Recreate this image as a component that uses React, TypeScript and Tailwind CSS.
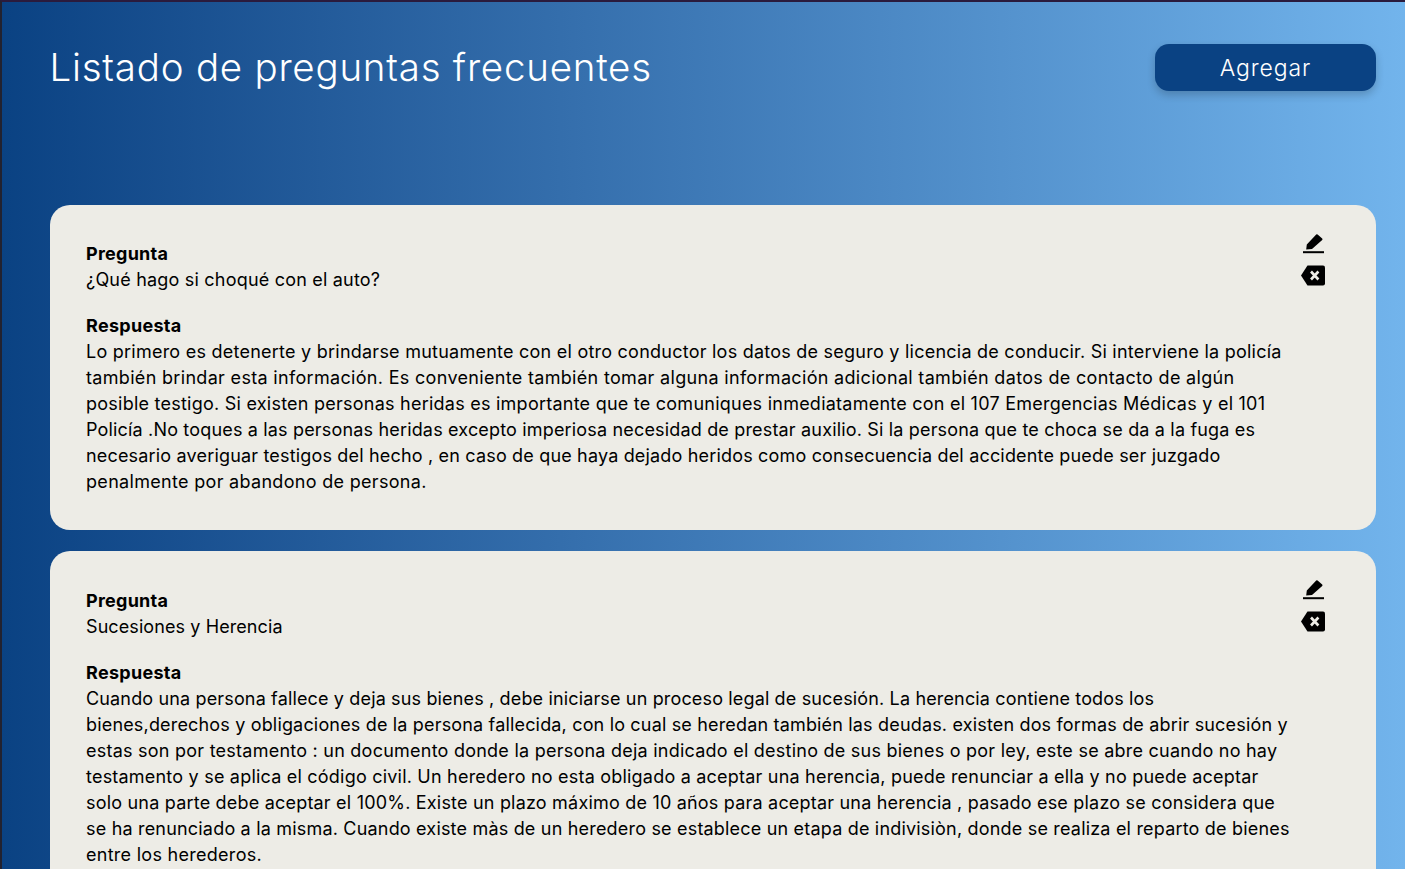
const faqs = [
  {
    question: "¿Qué hago si choqué con el auto?",
    questionClass: "tracking-[0.2px]",
    cardClass: "pt-[36px]",
    iconClass: "-mt-2",
    answer: [
      { text: "Lo primero es detenerte y brindarse mutuamente con el otro conductor los datos de seguro y licencia de conducir. Si interviene la policía", className: "tracking-[0.24px]" },
      { text: "también brindar esta información. Es conveniente también tomar alguna información adicional también datos de contacto de algún", className: "tracking-[0.32px]" },
      { text: "posible testigo. Si existen personas heridas es importante que te comuniques inmediatamente con el 107 Emergencias Médicas y el 101", className: "tracking-[0.24px]" },
      { text: "Policía .No toques a las personas heridas excepto imperiosa necesidad de prestar auxilio. Si la persona que te choca se da a la fuga es", className: "tracking-[0.17px]" },
      { text: "necesario averiguar testigos del hecho , en caso de que haya dejado heridos como consecuencia del accidente puede ser juzgado", className: "tracking-[0.175px]" },
      { text: "penalmente por abandono de persona.", className: "tracking-[0.31px]" },
    ],
  },
  {
    question: "Sucesiones y Herencia",
    questionClass: "tracking-[0.09px]",
    cardClass: "pt-[37px]",
    iconClass: "-mt-[9px]",
    answer: [
      { text: "Cuando una persona fallece y deja sus bienes , debe iniciarse un proceso legal de sucesión. La herencia contiene todos los", className: "tracking-[0.15px]" },
      { text: "bienes,derechos y obligaciones de la persona fallecida, con lo cual se heredan también las deudas. existen dos formas de abrir sucesión y", className: "tracking-[0.17px]" },
      { text: "estas son por testamento : un documento donde la persona deja indicado el destino de sus bienes o por ley, este se abre cuando no hay", className: "tracking-[0.24px]" },
      { text: "testamento y se aplica el código civil. Un heredero no esta obligado a aceptar una herencia, puede renunciar a ella y no puede aceptar", className: "tracking-[0.21px]" },
      { text: "solo una parte debe aceptar el 100%. Existe un plazo máximo de 10 años para aceptar una herencia , pasado ese plazo se considera que", className: "tracking-[0.2px]" },
      { text: "se ha renunciado a la misma. Cuando existe màs de un heredero se establece un etapa de indivisiòn, donde se realiza el reparto de bienes", className: "tracking-[0.19px]" },
      { text: "entre los herederos.", className: "tracking-[0.28px]" },
    ],
  },
];

function EditIcon() {
  return (
    <svg width="21" height="21" viewBox="0 0 21 21" fill="currentColor">
      <path d="M3.2 16.4 L3.8 11.6 L13.2 1.6 a1 1 0 0 1 1.4 0 L19.2 5.6 a1 1 0 0 1 0 1.4 L9 16 Z" />
      <rect x="0" y="18.2" width="21" height="2" />
    </svg>
  );
}

function DeleteIcon() {
  return (
    <svg width="24" height="21" viewBox="0 0 24 21" fill="currentColor">
      <path d="M6.5 0.5 H22 a2 2 0 0 1 2 2 V18.5 a2 2 0 0 1 -2 2 H6.5 L0 10.5 Z" />
      <path d="M10 6.5 L17.4 14.5 M17.4 6.5 L10 14.5" stroke="#edece6" strokeWidth="2.6" fill="none" />
    </svg>
  );
}

export default function App() {
  return (
    <div className="h-[869px] overflow-hidden border-t-2 border-l-2 border-t-[#2a1b3d] border-l-[#222230] bg-gradient-to-r from-[#0a4283] to-[#72b4ec] pr-[29px] pl-[47.5px] font-['Inter',sans-serif]">
      <div className="flex items-start justify-between pt-[42px]">
        <h1 className="text-[38.5px] leading-[46px] font-light tracking-[0.76px] text-white">
          Listado de preguntas frecuentes
        </h1>
        <button className="h-[47px] w-[221px] rounded-[14px] bg-[#0a4283] pt-[2px] text-[23px] font-light tracking-[0.9px] text-white shadow-[0_4px_8px_rgba(0,0,0,0.2)]">
          Agregar
        </button>
      </div>
      <div className="mt-[114px] flex flex-col gap-[21px]">
        {faqs.map((faq) => (
          <div
            key={faq.question}
            className={`flex justify-between rounded-[20px] bg-[#edece6] pr-[51px] pb-[35px] pl-[36.5px] text-[18px] leading-[26px] text-black ${faq.cardClass}`}
          >
            <div>
              <p className="font-bold tracking-[0.25px]">Pregunta</p>
              <p className={faq.questionClass}>{faq.question}</p>
              <p className="mt-5 font-bold tracking-[0.3px]">Respuesta</p>
              {faq.answer.map((line) => (
                <p key={line.text} className={`whitespace-nowrap ${line.className}`}>
                  {line.text}
                </p>
              ))}
            </div>
            <div className={`flex flex-col items-center gap-[11px] ${faq.iconClass}`}>
              <EditIcon />
              <DeleteIcon />
            </div>
          </div>
        ))}
      </div>
    </div>
  );
}
